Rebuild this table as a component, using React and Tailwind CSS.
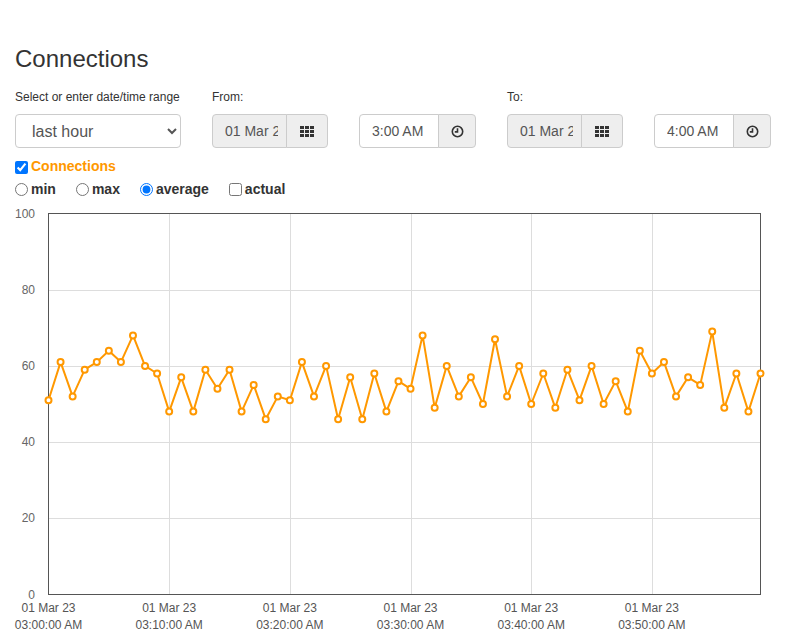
import React from "react";

const data = [
  51, 61, 52, 59, 61, 64, 61, 68, 60, 58,
  48, 57, 48, 59, 54, 59, 48, 55, 46, 52,
  51, 61, 52, 60, 46, 57, 46, 58, 48, 56,
  54, 68, 49, 60, 52, 57, 50, 67, 52, 60,
  50, 58, 49, 59, 51, 60, 50, 56, 48, 64,
  58, 61, 52, 57, 55, 69, 49, 58, 48, 58,
];

const X0 = 48.5;
const X1 = 760.5;
const Y0 = 594.5; // value 0
const Y100 = 213.5; // value 100

function GridIcon() {
  return (
    <svg width="14" height="11" viewBox="0 0 14 11" fill="#333">
      {[0, 5, 10].map((x) =>
        [0, 4, 8].map((y) => <rect key={x + "-" + y} x={x} y={y} width="4" height="3" />)
      )}
    </svg>
  );
}

function ClockIcon() {
  return (
    <svg width="13" height="13" viewBox="0 0 13 13" fill="none" stroke="#333" strokeWidth="1.6">
      <circle cx="6.5" cy="6.5" r="5.2" />
      <path d="M6.5 3.2V6.9H3.8" />
    </svg>
  );
}

function DateGroup() {
  return (
    <div className="flex h-[34px]">
      <input
        readOnly
        value="01 Mar 2023"
        className="w-[75px] h-[34px] pl-3 pr-2 text-[14px] text-[#555] bg-[#eee] border border-[#ccc] rounded-l-[4px] outline-none"
      />
      <div className="w-[42px] h-[34px] -ml-px flex items-center justify-center bg-[#eee] border border-[#ccc] rounded-r-[4px]">
        <GridIcon />
      </div>
    </div>
  );
}

function TimeGroup({ value }) {
  return (
    <div className="flex h-[34px]">
      <input
        readOnly
        value={value}
        className="w-[80px] h-[34px] px-3 text-[14px] text-[#555] bg-white border border-[#ccc] rounded-l-[4px] outline-none"
      />
      <div className="w-[38px] h-[34px] -ml-px flex items-center justify-center bg-[#eee] border border-[#ccc] rounded-r-[4px]">
        <ClockIcon />
      </div>
    </div>
  );
}

function Chart() {
  const xs = data.map((_, i) => X0 + (i * (X1 - X0)) / 59);
  const ys = data.map((v) => Y0 - (v * (Y0 - Y100)) / 100);
  const pts = xs.map((x, i) => `${x.toFixed(1)},${ys[i].toFixed(1)}`).join(" ");
  const yTicks = [0, 20, 40, 60, 80, 100];
  const vLines = [1, 2, 3, 4, 5].map((k) => X0 + (k * 10 * (X1 - X0)) / 59);
  const xLabels = [0, 1, 2, 3, 4, 5].map((k) => ({
    x: X0 + (k * 10 * (X1 - X0)) / 59,
    t: `03:${k}0:00 AM`,
  }));
  return (
    <svg width="787" height="429" viewBox="0 205 787 429" className="block">
      {yTicks.slice(1, 5).map((v) => {
        const y = Math.round(Y0 - (v * (Y0 - Y100)) / 100) + 0.5;
        return <line key={v} x1={X0} x2={X1} y1={y} y2={y} stroke="#ddd" strokeWidth="1" />;
      })}
      {vLines.map((x, i) => (
        <line key={i} x1={Math.round(x) + 0.5} x2={Math.round(x) + 0.5} y1={Y100} y2={Y0} stroke="#ddd" strokeWidth="1" />
      ))}
      <rect x={X0} y={Y100} width={X1 - X0} height={Y0 - Y100} fill="none" stroke="#555" strokeWidth="1" />
      {yTicks.map((v) => {
        const y = Y0 - (v * (Y0 - Y100)) / 100;
        return (
          <text key={v} x="35" y={y + 4} textAnchor="end" fontSize="12" fill="#666" fontFamily="Liberation Sans, Arial, sans-serif">
            {v}
          </text>
        );
      })}
      {xLabels.map((l, i) => (
        <g key={i} fontSize="12" fill="#555" fontFamily="Liberation Sans, Arial, sans-serif" textAnchor="middle">
          <text x={l.x} y="612">01 Mar 23</text>
          <text x={l.x} y="629">{l.t}</text>
        </g>
      ))}
      <polyline points={pts} fill="none" stroke="#ff9800" strokeWidth="2" strokeLinejoin="round" />
      {xs.map((x, i) => (
        <circle key={i} cx={x} cy={ys[i]} r="3" fill="#fff" stroke="#ff9800" strokeWidth="2" />
      ))}
    </svg>
  );
}

export default function App() {
  return (
    <div className="w-[787px] h-[634px] bg-white overflow-hidden text-[#333] font-['Liberation_Sans',Arial,sans-serif]">
      <div className="px-[15px] pt-[46px]">
        <h3 className="text-[24px] leading-[26px] font-normal">Connections</h3>
        <div className="mt-[17px] flex gap-[31px]">
          <div className="flex flex-col">
            <label className="text-[12px] leading-[16px] h-[16px]">Select or enter date/time range</label>
            <select
              defaultValue="last hour"
              className="mt-[9px] w-[166px] h-[34px] pl-3 pr-2 text-[16px] text-[#555] bg-white border border-[#ccc] rounded-[4px]"
            >
              <option>last hour</option>
              <option>last day</option>
            </select>
          </div>
          <div className="flex flex-col">
            <label className="text-[12px] leading-[16px] h-[16px]">From:</label>
            <div className="mt-[9px] flex gap-[31px]">
              <DateGroup />
              <TimeGroup value="3:00 AM" />
            </div>
          </div>
          <div className="flex flex-col">
            <label className="text-[12px] leading-[16px] h-[16px]">To:</label>
            <div className="mt-[9px] flex gap-[31px]">
              <DateGroup />
              <TimeGroup value="4:00 AM" />
            </div>
          </div>
        </div>
        <div className="mt-[9px] flex items-center h-[18px]">
          <input type="checkbox" defaultChecked className="w-[13px] h-[13px] m-0 mt-[3px]" />
          <span className="ml-[3px] text-[14px] font-bold text-[#ff9800]">Connections</span>
        </div>
        <div className="mt-[5px] flex items-center h-[18px] gap-[20px] text-[14px] font-bold">
          <label className="flex items-center">
            <input type="radio" name="agg" className="w-[13px] h-[13px] m-0" />
            <span className="ml-[3px]">min</span>
          </label>
          <label className="flex items-center">
            <input type="radio" name="agg" className="w-[13px] h-[13px] m-0" />
            <span className="ml-[3px]">max</span>
          </label>
          <label className="flex items-center">
            <input type="radio" name="agg" defaultChecked className="w-[13px] h-[13px] m-0" />
            <span className="ml-[3px]">average</span>
          </label>
          <label className="flex items-center">
            <input type="checkbox" className="w-[13px] h-[13px] m-0" />
            <span className="ml-[3px]">actual</span>
          </label>
        </div>
      </div>
      <div className="mt-[7px]">
        <Chart />
      </div>
    </div>
  );
}
